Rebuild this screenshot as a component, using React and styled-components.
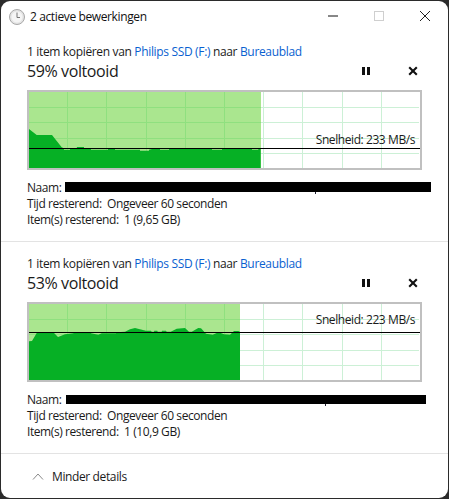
import React from "react";
import styled, { createGlobalStyle } from "styled-components";

const Global = createGlobalStyle`
  html, body { margin: 0; padding: 0; background: #2b2b2b; }
  body { width: 449px; height: 499px; overflow: hidden; font-family: "Open Sans", "Liberation Sans", sans-serif; color: #1a1a1a; }
`;

const Win = styled.div`
  width: 447px; height: 497px; margin: 1px 0 0 1px; background: #fff; border-radius: 9px;
  display: flex; flex-direction: column; overflow: hidden;
`;
const TitleBar = styled.div`
  height: 29px; flex: none; display: flex; align-items: center; padding: 0 0 0 8px;
`;
const ClockIcon = styled.svg`
  margin-top: 2px; flex: none;
`;
const TitleText = styled.span`
  font-size: 12px; letter-spacing: -0.38px; margin-left: 5px; padding-top: 2px; flex: 1; color: #111;
`;
const WinBtn = styled.button`
  width: 46px; height: 29px; border: 0; background: none; padding: 0; display: flex; align-items: center; justify-content: center;
`;
const Section = styled.section`
  height: 212px; flex: none; padding: 14px 0 0 26px; box-sizing: border-box; display: flex; flex-direction: column;
  border-bottom: 1px solid #e3e3e3;
`;
const Heading = styled.div`
  font-size: 12px; line-height: 16px; letter-spacing: -0.34px; white-space: nowrap;
`;
const Link = styled.span`color: #0a5fd0;`;
const PercentRow = styled.div`
  display: flex; align-items: center; height: 22px; width: 395px;
`;
const Percent = styled.div`
  font-size: 16px; letter-spacing: -0.4px; flex: 1;
`;
const Ctl = styled.button`
  width: 10px; height: 10px; border: 0; padding: 0; background: none; display: flex; margin-left: ${p => p.$ml || 0}px; margin-right: ${p => p.$mr || 0}px;
`;
const Chart = styled.div`
  position: relative; width: 395px; height: 80px; box-sizing: border-box; border: 2px solid #c0c0c0; margin-top: 8px;
  svg { display: block; }
`;
const Speed = styled.span`
  position: absolute; right: 5px; top: ${p => p.$top}px; font-size: 12px; line-height: 16px; letter-spacing: -0.42px; white-space: nowrap;
`;
const Details = styled.div`
  margin-top: 10px; display: flex; flex-direction: column; font-size: 12px; letter-spacing: -0.42px; line-height: 16px;
`;
const NameRow = styled.div`
  display: flex; align-items: center; height: 16px; white-space: pre;
`;
const Redact = styled.div`
  position: relative; background: #000; height: ${p => p.$bh}px; width: ${p => p.$w}px; margin-left: ${p => p.$ml}px; margin-bottom: ${p => p.$mb}px;
  &::after { content: ""; position: absolute; left: ${p => p.$tick}px; top: 100%; width: 1px; height: 2px; background: #223; }
`;
const Footer = styled.div`
  flex: 1; display: flex; align-items: center; padding: 1px 0 0 31px; gap: 8px; font-size: 12px; letter-spacing: -0.38px;
`;

const grids = [67, 106, 146, 185, 224, 263, 302, 342, 381];

const zoomToPage = (pts, oy) => pts.map(([x, y]) => `${(x / 3 + 20).toFixed(1)},${(y / 3 + oy).toFixed(1)}`).join(" ");

const data1 = [[27,132],[50,150],[96,150],[125,187],[131,190],[132,194],[150,194],[150,190],[170,190],[171,186],[192,186],[192,190],[213,190],[213,194],[264,194],[264,190],[285,190],[285,194],[360,194],[360,197],[387,197],[387,194],[396,192],[420,192],[420,194],[447,194],[447,190],[576,190],[576,194],[606,194],[606,190],[696,190],[696,194],[715,194],[715,190],[722,190]];
const data2 = [[27,139],[36,138],[50,114],[54,112],[100,112],[114,126],[135,118],[160,115],[165,112],[212,112],[213,115],[235,119],[245,115],[288,115],[289,112],[315,110],[330,103],[345,99],[360,103],[378,107],[393,107],[395,110],[402,110],[403,107],[412,107],[413,110],[425,110],[426,107],[438,107],[440,110],[452,110],[470,101],[495,99],[507,110],[515,110],[535,99],[543,100],[558,116],[578,119],[590,114],[602,114],[612,118],[630,119],[642,108],[655,108],[660,110]];

function Graph({ top, hLines, lineY, fillTo, data, oy }) {
  const bottom = top + 76;
  const poly = `${zoomToPage(data, oy)} ${fillTo},${bottom} 29,${bottom}`;
  return (
    <svg width="391" height="76" viewBox={`29 ${top} 391 76`}>
      <rect x="29" y={top} width="391" height="76" fill="#fff" />
      <g shapeRendering="crispEdges">
        {grids.map(x => <line key={x} x1={x + .5} x2={x + .5} y1={top} y2={bottom} stroke="#ccf0d6" strokeWidth="1" />)}
        {hLines.map(y => <line key={y} x1="29" x2="419" y1={y + .5} y2={y + .5} stroke="#ccf0d6" strokeWidth="1" />)}
        <rect x="29" y={top} width={fillTo - 29} height="76" fill="#aae68f" />
        {grids.filter(x => x < fillTo).map(x => <line key={x} x1={x + .5} x2={x + .5} y1={top} y2={bottom} stroke="#8fe07f" strokeWidth="1" />)}
        {hLines.map(y => <line key={y} x1="29" x2={fillTo} y1={y + .5} y2={y + .5} stroke="#8fe07f" strokeWidth="1" />)}
      </g>
      <polygon points={poly} fill="#06b025" />
      <line x1="29" x2="420" y1={lineY} y2={lineY} stroke="#000" strokeWidth="1" />
    </svg>
  );
}

const PauseIcon = () => (
  <svg width="10" height="10" viewBox="0 0 10 10"><rect x="1" y="1" width="3" height="8" fill="#111" /><rect x="6" y="1" width="3" height="8" fill="#111" /></svg>
);
const CloseIcon = () => (
  <svg width="10" height="10" viewBox="0 0 10 10"><path d="M1.2 1.2 8.8 8.8M8.8 1.2 1.2 8.8" stroke="#111" strokeWidth="2.1" /></svg>
);

function Op({ pct, chartTop, hLines, lineY, fillTo, data, oy, speedText, speedTop, w, ml, bh, mb, tick, items }) {
  return (
    <Section>
      <Heading>1 item kopiëren van <Link>Philips SSD (F:)</Link> naar <Link>Bureaublad</Link></Heading>
      <PercentRow>
        <Percent>{pct}% voltooid</Percent>
        <Ctl><PauseIcon /></Ctl>
        <Ctl $ml={37} $mr={4}><CloseIcon /></Ctl>
      </PercentRow>
      <Chart>
        <Graph top={chartTop} hLines={hLines} lineY={lineY} fillTo={fillTo} data={data} oy={oy} />
        <Speed $top={speedTop}>Snelheid: {speedText} MB/s</Speed>
      </Chart>
      <Details>
        <NameRow>Naam: <Redact $w={w} $ml={ml} $bh={bh} $mb={mb} $tick={tick} /></NameRow>
        <div>Tijd resterend:&nbsp; Ongeveer 60 seconden</div>
        <div>Item(s) resterend:&nbsp; {items}</div>
      </Details>
    </Section>
  );
}

export default function App() {
  return (
    <>
      <Global />
      <Win>
        <TitleBar>
          <ClockIcon width="16" height="16" viewBox="0 0 16 16">
            <circle cx="8" cy="8" r="7.5" fill="#e4e4e4" stroke="#a8a8a8" />
            <circle cx="8" cy="8" r="5.5" fill="#f5f5f5" />
            <path d="M8 3.5V8.5H11" fill="none" stroke="#777" strokeWidth="1" />
          </ClockIcon>
          <TitleText>2 actieve bewerkingen</TitleText>
          <WinBtn><svg width="10" height="10" viewBox="0 0 10 10"><path d="M0 5H10" stroke="#111" /></svg></WinBtn>
          <WinBtn><svg width="10" height="10" viewBox="0 0 10 10"><rect x=".5" y=".5" width="9" height="9" fill="none" stroke="#cfcfcf" /></svg></WinBtn>
          <WinBtn><svg width="10" height="10" viewBox="0 0 10 10"><path d="M0 0 10 10M10 0 0 10" stroke="#222" /></svg></WinBtn>
        </TitleBar>
        <Op pct={59} chartTop={92} hLines={[107, 122, 138, 153]} lineY={148.5} fillTo={260.7} data={data1} oy={85}
          speedText="233" speedTop={40} w={366} ml={1} bh={10} mb={2} tick={250} items="1 (9,65 GB)" />
        <Op pct={53} chartTop={304} hLines={[319, 334, 350, 365]} lineY={332.5} fillTo={240} data={data2} oy={295}
          speedText="223" speedTop={8} w={360} ml={2} bh={9} mb={1} tick={259} items="1 (10,9 GB)" />
        <Footer>
          <svg width="12" height="7" viewBox="0 0 12 7"><path d="M1 6.5 6 1 11 6.5" fill="none" stroke="#8a8a8a" strokeWidth="1" /></svg>
          <span>Minder details</span>
        </Footer>
      </Win>
    </>
  );
}
